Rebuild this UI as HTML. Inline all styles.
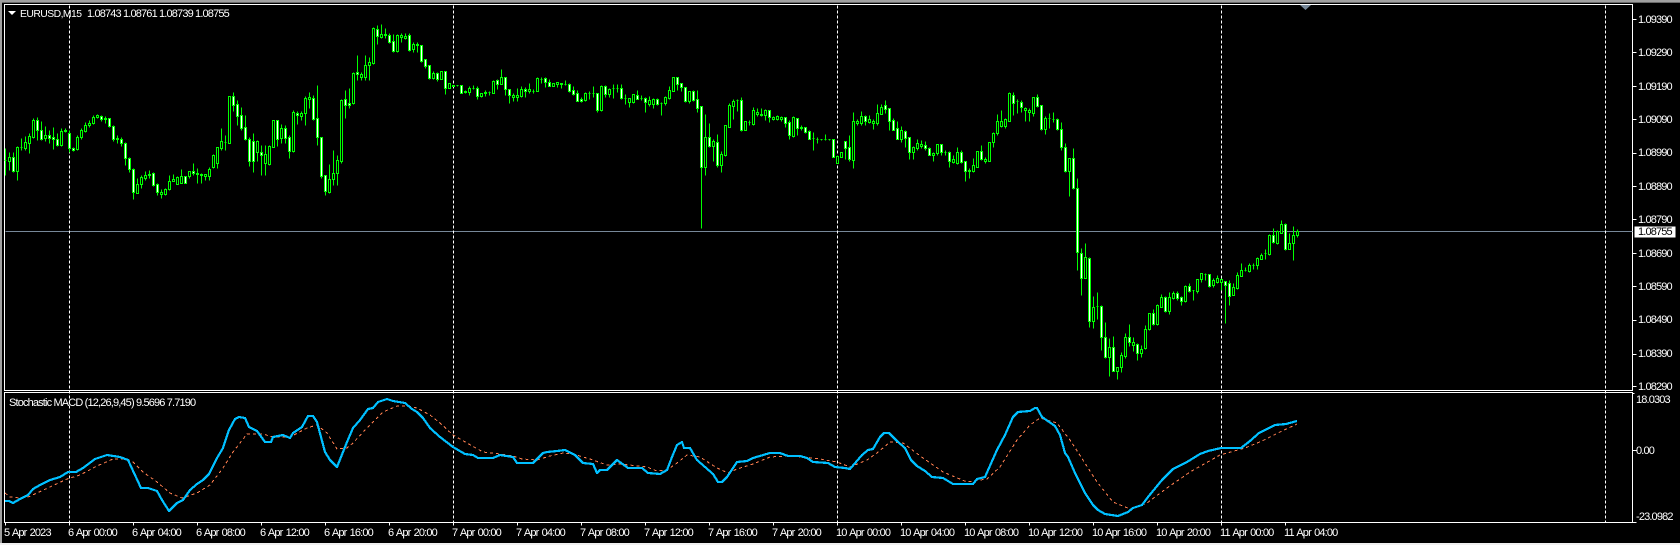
<!DOCTYPE html>
<html>
<head>
<meta charset="utf-8">
<style>
html,body{margin:0;padding:0;background:#000;width:1680px;height:545px;overflow:hidden}
svg{display:block;position:absolute;left:0;top:0}
text{font-family:"Liberation Sans",sans-serif;font-size:11px;letter-spacing:-.85px;fill:#fff}
.t text{word-spacing:1px}
</style>
</head>
<body>
<svg width="1680" height="545" viewBox="0 0 1680 545" xmlns="http://www.w3.org/2000/svg">
<rect width="1680" height="545" fill="#000"/>
<rect x="0" y="0" width="1680" height="2" fill="#a0a0a0"/>
<rect x="0" y="2" width="1680" height="1" fill="#696969"/>
<rect x="0" y="0" width="2" height="545" fill="#a0a0a0"/>
<rect x="0" y="543" width="1680" height="2" fill="#f0f0f0"/>

<g shape-rendering="crispEdges" transform="translate(.5 .5)">
<path d="M4 4H1632V390H4ZM4 392H1632V522H4Z" fill="none" stroke="#fff"/>
<path d="M1632 19h4M1632 52h4M1632 86h4M1632 119h4M1632 153h4M1632 186h4M1632 219h4M1632 253h4M1632 286h4M1632 320h4M1632 354h4M1632 386h4M1632 393h2M1632 450h4M1632 522h4M5 522v3M69 522v3M133 522v3M197 522v3M261 522v3M325 522v3M389 522v3M453 522v3M517 522v3M581 522v3M645 522v3M709 522v3M773 522v3M837 522v3M901 522v3M965 522v3M1029 522v3M1093 522v3M1157 522v3M1221 522v3M1285 522v3" stroke="#fff" fill="none"/>
<path d="M5 231H1632" stroke="#778899"/>
<path d="M69 5V522M453 5V522M837 5V522M1221 5V522M1605 5V522" stroke="#fff" stroke-dasharray="3 2" fill="none"/>

<path fill="none" stroke="#00ff00" d="M5 148V175M9 152V170M13 152V172M17 146V180M21 138V150M25 136V150M29 133V153M33 118V138M37 117V140M41 121V140M45 126V141M49 130V143M53 127V149M57 133V146M61 128V146M65 128V132M69 130V152M73 147V151M77 135V150M81 128V139M85 122V132M89 120V127M93 115V124M97 114V118M101 115V121M105 116V123M109 118V127M113 125V141M117 135V143M121 137V146M125 142V165M129 157V172M133 168V199M137 178V193M141 175V188M145 171V180M149 170V178M153 172V186M157 183V195M161 189V198M165 188V195M169 175V190M173 174V181M177 176V184M181 169V183M185 176V183M189 171V178M193 163V175M197 168V183M201 173V183M205 174V180M209 167V180M213 154V168M217 147V168M221 128V150M225 135V150M229 96V143M233 92V111M237 100V125M241 107V130M245 115V140M249 137V166M253 133V172M257 140V161M261 145V175M265 145V175M269 145V165M273 120V147M277 120V146M281 124V143M285 125V143M289 135V158M293 110V152M297 111V124M301 111V120M305 96V125M309 92V108M313 95V120M317 85V145M321 137V178M325 175V195M329 164V193M333 150V185M337 155V185M341 99V163M345 90V118M349 88V108M353 72V104M357 55V80M361 72V80M365 55V80M369 57V80M373 27V64M377 25V44M381 24V38M385 28V38M389 33V43M393 34V52M397 34V52M401 33V42M405 33V39M409 33V51M413 42V52M417 42V52M421 45V62M425 59V68M429 65V79M433 71V79M437 72V81M441 71V79M445 71V94M449 83V88M453 85V86M457 85V86M461 85V93M465 90V93M469 86V95M473 85V89M477 86V99M481 93V97M485 90V96M489 91V95M493 80V93M497 79V89M501 69V84M505 77V95M509 89V103M513 93V101M517 88V101M521 86V97M525 87V97M529 83V93M533 89V93M537 77V91M541 77V83M545 77V87M549 79V86M553 83V86M557 82V87M561 83V88M565 80V85M569 83V92M573 86V95M577 90V101M581 97V102M585 92V101M589 91V99M593 86V97M597 93V112M601 85V111M605 85V97M609 88V97M613 84V98M617 84V92M621 84V99M625 94V104M629 98V107M633 94V103M637 90V99M641 95V100M645 97V112M649 96V106M653 98V108M657 98V105M661 102V115M665 96V105M669 86V99M673 77V91M677 77V90M681 83V91M685 87V102M689 91V103M693 90V101M697 90V112M701 106V228M705 114V175M709 123V147M713 139V161M717 134V167M721 151V172M725 125V156M729 103V127M733 99V119M737 99V111M741 97V131M745 121V130M749 120V125M753 107V125M757 108V116M761 108V116M765 109V120M769 110V122M773 116V120M777 115V120M781 116V121M785 117V127M789 120V139M793 116V137M797 118V135M801 125V130M805 127V133M809 130V139M813 132V150M817 137V143M821 139V140M825 134V140M829 139V140M833 139V157M837 155V163M841 152V157M845 141V159M849 135V161M853 112V168M857 119V125M861 111V125M865 115V125M869 115V123M873 119V129M877 104V125M881 104V114M885 100V113M889 108V130M893 118V130M897 121V139M901 126V142M905 130V147M909 137V159M913 146V159M917 139V150M921 140V148M925 141V150M929 147V155M933 152V161M937 144V155M941 144V155M945 150V155M949 151V167M953 155V163M957 147V164M961 150V163M965 161V181M969 168V178M973 158V172M977 151V167M981 145V160M985 157V163M989 142V161M993 132V147M997 114V135M1001 110V127M1005 118V128M1009 92V121M1013 92V115M1017 99V113M1021 100V112M1025 107V121M1029 108V121M1033 97V116M1037 94V107M1041 105V130M1045 116V134M1049 113V128M1053 112V122M1057 118V130M1061 122V150M1065 143V172M1069 158V196M1073 148V189M1077 178V270M1081 248V295M1085 243V278M1089 257V327M1093 296V328M1097 292V319M1101 305V350M1105 322V358M1109 338V376M1113 336V371M1117 367V379M1121 352V372M1125 333V358M1129 324V346M1133 337V351M1137 343V360M1141 345V357M1145 325V349M1149 313V330M1153 309V325M1157 304V325M1161 294V307M1165 296V312M1169 292V314M1173 291V299M1177 291V300M1181 296V305M1185 285V302M1189 283V292M1193 290V300M1197 279V293M1201 273V282M1205 273V280M1209 274V287M1213 278V287M1217 275V283M1221 278V290M1225 281V323M1229 280V305M1233 283V295M1237 272V289M1241 263V276M1245 267V271M1249 263V272M1253 263V269M1257 257V269M1261 253V259M1265 249V259M1269 234V255M1273 228V243M1277 230V244M1281 220V233M1285 223V250M1289 233V249M1293 226V260M1297 229V237"/>

<path fill="#000" stroke="#00ff00" d="M4 160h2V160h-2zM8 157h2V161h-2zM16 147h2V171h-2zM20 147h2V147h-2zM24 142h2V148h-2zM28 136h2V143h-2zM32 120h2V137h-2zM44 135h2V138h-2zM60 131h2V145h-2zM76 137h2V149h-2zM80 130h2V137h-2zM84 125h2V131h-2zM88 123h2V125h-2zM92 117h2V123h-2zM96 115h2V117h-2zM136 184h2V193h-2zM140 177h2V184h-2zM144 175h2V178h-2zM148 174h2V175h-2zM160 192h2V194h-2zM164 189h2V194h-2zM168 181h2V189h-2zM172 179h2V181h-2zM176 177h2V184h-2zM180 176h2V183h-2zM188 171h2V176h-2zM196 173h2V174h-2zM200 174h2V175h-2zM204 174h2V176h-2zM208 169h2V176h-2zM212 155h2V167h-2zM216 147h2V163h-2zM220 141h2V148h-2zM224 142h2V142h-2zM228 96h2V143h-2zM256 141h2V152h-2zM264 154h2V163h-2zM268 146h2V164h-2zM272 120h2V147h-2zM280 128h2V138h-2zM292 112h2V151h-2zM300 113h2V116h-2zM304 98h2V113h-2zM308 97h2V99h-2zM328 179h2V192h-2zM332 173h2V179h-2zM336 160h2V173h-2zM340 100h2V161h-2zM352 73h2V103h-2zM360 74h2V77h-2zM364 65h2V77h-2zM368 62h2V65h-2zM372 28h2V63h-2zM380 34h2V37h-2zM396 35h2V51h-2zM400 35h2V37h-2zM404 36h2V38h-2zM412 44h2V49h-2zM432 73h2V78h-2zM440 71h2V79h-2zM448 83h2V88h-2zM452 85h2V86h-2zM456 85h2V85h-2zM468 88h2V92h-2zM472 88h2V88h-2zM480 93h2V96h-2zM488 92h2V92h-2zM492 81h2V93h-2zM500 77h2V84h-2zM512 95h2V97h-2zM516 95h2V97h-2zM520 89h2V96h-2zM528 89h2V91h-2zM532 91h2V91h-2zM536 78h2V91h-2zM540 79h2V79h-2zM552 83h2V86h-2zM556 82h2V84h-2zM564 84h2V84h-2zM584 93h2V100h-2zM588 93h2V93h-2zM592 93h2V93h-2zM600 86h2V110h-2zM608 89h2V94h-2zM612 88h2V88h-2zM616 88h2V88h-2zM624 98h2V98h-2zM628 98h2V102h-2zM632 94h2V102h-2zM640 98h2V98h-2zM648 100h2V104h-2zM652 99h2V104h-2zM660 103h2V103h-2zM664 97h2V103h-2zM668 90h2V98h-2zM672 77h2V91h-2zM688 91h2V101h-2zM704 137h2V167h-2zM712 141h2V146h-2zM720 154h2V165h-2zM724 125h2V155h-2zM728 105h2V127h-2zM732 101h2V106h-2zM736 100h2V100h-2zM744 121h2V130h-2zM748 122h2V122h-2zM752 110h2V124h-2zM756 112h2V114h-2zM764 110h2V115h-2zM772 117h2V119h-2zM776 116h2V119h-2zM780 117h2V119h-2zM792 117h2V136h-2zM812 138h2V138h-2zM816 139h2V139h-2zM820 139h2V139h-2zM824 139h2V139h-2zM828 139h2V139h-2zM836 156h2V163h-2zM840 152h2V157h-2zM852 121h2V160h-2zM856 121h2V123h-2zM860 116h2V123h-2zM868 119h2V122h-2zM872 121h2V123h-2zM876 113h2V123h-2zM880 107h2V114h-2zM900 130h2V139h-2zM912 147h2V152h-2zM916 143h2V148h-2zM920 144h2V146h-2zM932 153h2V155h-2zM936 144h2V153h-2zM944 152h2V152h-2zM952 159h2V162h-2zM956 152h2V163h-2zM968 170h2V171h-2zM972 165h2V171h-2zM976 151h2V167h-2zM984 159h2V161h-2zM988 142h2V161h-2zM992 133h2V142h-2zM996 121h2V133h-2zM1000 121h2V126h-2zM1004 119h2V126h-2zM1008 93h2V121h-2zM1016 101h2V101h-2zM1024 108h2V110h-2zM1028 110h2V112h-2zM1032 97h2V113h-2zM1044 118h2V129h-2zM1048 118h2V118h-2zM1052 119h2V119h-2zM1068 158h2V171h-2zM1084 257h2V278h-2zM1092 307h2V321h-2zM1096 306h2V306h-2zM1108 347h2V357h-2zM1116 367h2V371h-2zM1120 355h2V367h-2zM1124 337h2V356h-2zM1132 342h2V345h-2zM1140 349h2V353h-2zM1144 329h2V348h-2zM1148 313h2V329h-2zM1156 305h2V324h-2zM1160 297h2V307h-2zM1168 297h2V311h-2zM1172 293h2V298h-2zM1184 286h2V301h-2zM1192 290h2V290h-2zM1196 279h2V291h-2zM1200 273h2V279h-2zM1204 274h2V274h-2zM1212 280h2V285h-2zM1216 278h2V282h-2zM1220 279h2V282h-2zM1232 287h2V295h-2zM1236 275h2V288h-2zM1240 270h2V276h-2zM1244 270h2V270h-2zM1248 265h2V271h-2zM1252 265h2V265h-2zM1256 258h2V265h-2zM1260 255h2V259h-2zM1264 253h2V253h-2zM1268 235h2V254h-2zM1276 231h2V243h-2zM1280 224h2V233h-2zM1288 243h2V249h-2zM1292 235h2V243h-2zM1296 231h2V235h-2z"/>

<path fill="#fff" stroke="#00ff00" d="M12 157h2V171h-2zM36 120h2V130h-2zM40 130h2V139h-2zM48 135h2V138h-2zM52 137h2V139h-2zM56 139h2V145h-2zM64 130h2V131h-2zM68 133h2V148h-2zM72 148h2V150h-2zM100 116h2V119h-2zM104 118h2V119h-2zM108 118h2V126h-2zM112 126h2V139h-2zM116 138h2V139h-2zM120 139h2V143h-2zM124 143h2V158h-2zM128 158h2V169h-2zM132 169h2V192h-2zM152 173h2V185h-2zM156 184h2V192h-2zM184 176h2V183h-2zM192 171h2V173h-2zM232 96h2V105h-2zM236 104h2V116h-2zM240 115h2V128h-2zM244 127h2V139h-2zM248 139h2V161h-2zM252 141h2V161h-2zM260 152h2V155h-2zM276 120h2V139h-2zM284 128h2V138h-2zM288 137h2V151h-2zM296 113h2V115h-2zM312 98h2V119h-2zM316 118h2V137h-2zM320 137h2V176h-2zM324 175h2V191h-2zM344 99h2V105h-2zM348 103h2V105h-2zM356 72h2V74h-2zM376 29h2V36h-2zM384 34h2V35h-2zM388 35h2V42h-2zM392 41h2V51h-2zM408 35h2V50h-2zM416 44h2V45h-2zM420 45h2V61h-2zM424 59h2V66h-2zM428 65h2V78h-2zM436 73h2V79h-2zM444 71h2V88h-2zM460 85h2V93h-2zM464 91h2V92h-2zM476 88h2V96h-2zM484 92h2V93h-2zM496 80h2V84h-2zM504 77h2V89h-2zM508 89h2V95h-2zM524 89h2V91h-2zM544 78h2V82h-2zM548 82h2V86h-2zM560 83h2V84h-2zM568 84h2V91h-2zM572 90h2V94h-2zM576 93h2V101h-2zM580 99h2V101h-2zM596 93h2V110h-2zM604 86h2V94h-2zM620 88h2V98h-2zM636 95h2V99h-2zM644 98h2V102h-2zM656 99h2V104h-2zM676 77h2V84h-2zM680 83h2V87h-2zM684 87h2V101h-2zM692 91h2V100h-2zM696 99h2V108h-2zM700 106h2V167h-2zM708 137h2V146h-2zM716 142h2V165h-2zM740 100h2V130h-2zM760 114h2V115h-2zM768 110h2V117h-2zM784 117h2V123h-2zM788 122h2V135h-2zM796 118h2V128h-2zM800 127h2V128h-2zM804 127h2V132h-2zM808 131h2V139h-2zM832 139h2V157h-2zM844 141h2V148h-2zM848 147h2V159h-2zM864 116h2V121h-2zM884 105h2V109h-2zM888 108h2V121h-2zM892 120h2V130h-2zM896 128h2V139h-2zM904 131h2V138h-2zM908 137h2V152h-2zM924 145h2V148h-2zM928 148h2V155h-2zM940 144h2V152h-2zM948 152h2V161h-2zM960 152h2V162h-2zM964 161h2V171h-2zM980 151h2V159h-2zM1012 95h2V103h-2zM1020 102h2V107h-2zM1036 97h2V106h-2zM1040 105h2V129h-2zM1056 119h2V129h-2zM1060 129h2V147h-2zM1064 147h2V171h-2zM1072 158h2V188h-2zM1076 188h2V252h-2zM1080 253h2V278h-2zM1088 258h2V321h-2zM1100 306h2V337h-2zM1104 337h2V357h-2zM1112 347h2V371h-2zM1128 337h2V342h-2zM1136 344h2V353h-2zM1152 313h2V324h-2zM1164 297h2V311h-2zM1176 293h2V298h-2zM1180 297h2V301h-2zM1188 286h2V291h-2zM1208 274h2V286h-2zM1224 281h2V285h-2zM1228 283h2V296h-2zM1272 235h2V242h-2zM1284 224h2V249h-2z"/>

<rect x="1634" y="226" width="41" height="11" fill="#fff"/>
</g>

<polyline fill="none" stroke="#ff7f50" stroke-width="1" stroke-dasharray="3 3" shape-rendering="crispEdges" points="5,493 10,497 20,498 28,497 37,493 50,487 67,479 80,475 97,466 113,459 127,459 133,462 143,472 157,482 170,493 182,498 197,493 210,485 223,468 233,452 247,434 263,434 273,437 290,437 307,428 317,425 327,433 337,449 347,448 353,443 367,428 383,412 397,406 407,406 417,408 430,415 440,423 453,435 467,443 483,452 500,454 513,456 522,459 537,460 550,456 563,453 573,454 590,459 607,465 620,464 647,467 657,471 667,470 677,463 687,455 700,457 717,468 728,473 737,469 753,464 770,457 787,456 803,457 820,459 837,462 850,467 867,460 877,453 890,442 903,443 923,458 943,472 967,482 987,479 1000,467 1017,440 1030,425 1040,418 1057,423 1070,440 1083,460 1097,482 1113,502 1130,509 1147,503 1167,488 1190,472 1220,455 1245,448 1262,441 1280,432 1297,424"/>
<polyline fill="none" stroke="#00bfff" stroke-width="2.2" stroke-linejoin="round" shape-rendering="crispEdges" points="5,501 9,501 13,503 20,499 28,495 33,489 40,485 50,480 60,477 68,472 76,472 83,468 95,459 107,455 120,457 128,460 141,488 148,488 157,491 162,500 169,511 177,503 183,500 190,490 197,484 203,480 209,474 217,458 223,448 229,430 235,419 239,417 245,418 249,427 257,431 265,442 271,442 273,437 283,435 290,438 293,433 302,427 308,416 313,416 317,422 325,452 330,460 337,467 347,442 353,428 360,420 368,409 373,408 378,402 387,399 393,401 405,403 412,409 417,412 423,418 430,428 440,437 453,447 465,454 473,455 478,458 493,458 500,455 513,457 517,463 533,463 543,453 547,452 557,451 565,450 575,455 583,463 593,464 597,473 600,470 607,470 617,460 628,468 642,468 648,473 660,474 667,470 672,457 677,445 682,442 684,448 690,448 697,460 713,474 718,482 722,482 727,477 737,462 747,461 753,458 770,453 780,453 788,456 800,456 807,458 813,462 828,463 835,467 845,468 850,469 862,455 868,450 873,449 880,437 884,433 889,433 897,441 905,448 911,460 917,466 925,471 932,477 943,478 953,484 973,484 977,479 985,477 997,450 1005,435 1013,417 1018,412 1030,411 1035,408 1037,408 1042,417 1055,426 1060,435 1065,453 1068,457 1075,473 1085,493 1093,505 1098,510 1105,514 1118,516 1128,512 1133,508 1142,505 1148,497 1162,480 1173,469 1187,462 1200,454 1208,451 1221,448 1241,448 1250,441 1259,433 1275,425 1286,424 1297,421"/>

<path d="M8 11h8l-4 4z" fill="#fff"/>
<path d="M1300 5h11l-5.500 5z" fill="#778899"/>

<text x="20" y="17" style="font-size:10.4px;letter-spacing:-.55px">EURUSD,M15</text>
<text x="87" y="17">1.08743 1.08761 1.08739 1.08755</text>
<text x="9" y="406">Stochastic MACD (12,26,9,45) 9.5696 7.7190</text>

<g>
<text x="1638" y="23">1.09390</text>
<text x="1638" y="56">1.09290</text>
<text x="1638" y="90">1.09190</text>
<text x="1638" y="123">1.09090</text>
<text x="1638" y="156">1.08990</text>
<text x="1638" y="190">1.08890</text>
<text x="1638" y="223">1.08790</text>
<text x="1638" y="235" style="fill:#000">1.08755</text>
<text x="1638" y="257">1.08690</text>
<text x="1638" y="290">1.08590</text>
<text x="1638" y="323">1.08490</text>
<text x="1638" y="357">1.08390</text>
<text x="1638" y="390">1.08290</text>
<text x="1636" y="403">18.0303</text>
<text x="1636" y="454">0.00</text>
<text x="1636" y="520">-23.0982</text>
</g>

<g class="t">
<text x="4" y="536">5 Apr 2023</text>
<text x="68" y="536">6 Apr 00:00</text>
<text x="132" y="536">6 Apr 04:00</text>
<text x="196" y="536">6 Apr 08:00</text>
<text x="260" y="536">6 Apr 12:00</text>
<text x="324" y="536">6 Apr 16:00</text>
<text x="388" y="536">6 Apr 20:00</text>
<text x="452" y="536">7 Apr 00:00</text>
<text x="516" y="536">7 Apr 04:00</text>
<text x="580" y="536">7 Apr 08:00</text>
<text x="644" y="536">7 Apr 12:00</text>
<text x="708" y="536">7 Apr 16:00</text>
<text x="772" y="536">7 Apr 20:00</text>
<text x="836" y="536">10 Apr 00:00</text>
<text x="900" y="536">10 Apr 04:00</text>
<text x="964" y="536">10 Apr 08:00</text>
<text x="1028" y="536">10 Apr 12:00</text>
<text x="1092" y="536">10 Apr 16:00</text>
<text x="1156" y="536">10 Apr 20:00</text>
<text x="1220" y="536">11 Apr 00:00</text>
<text x="1284" y="536">11 Apr 04:00</text>
</g>
</svg>
</body>
</html>
